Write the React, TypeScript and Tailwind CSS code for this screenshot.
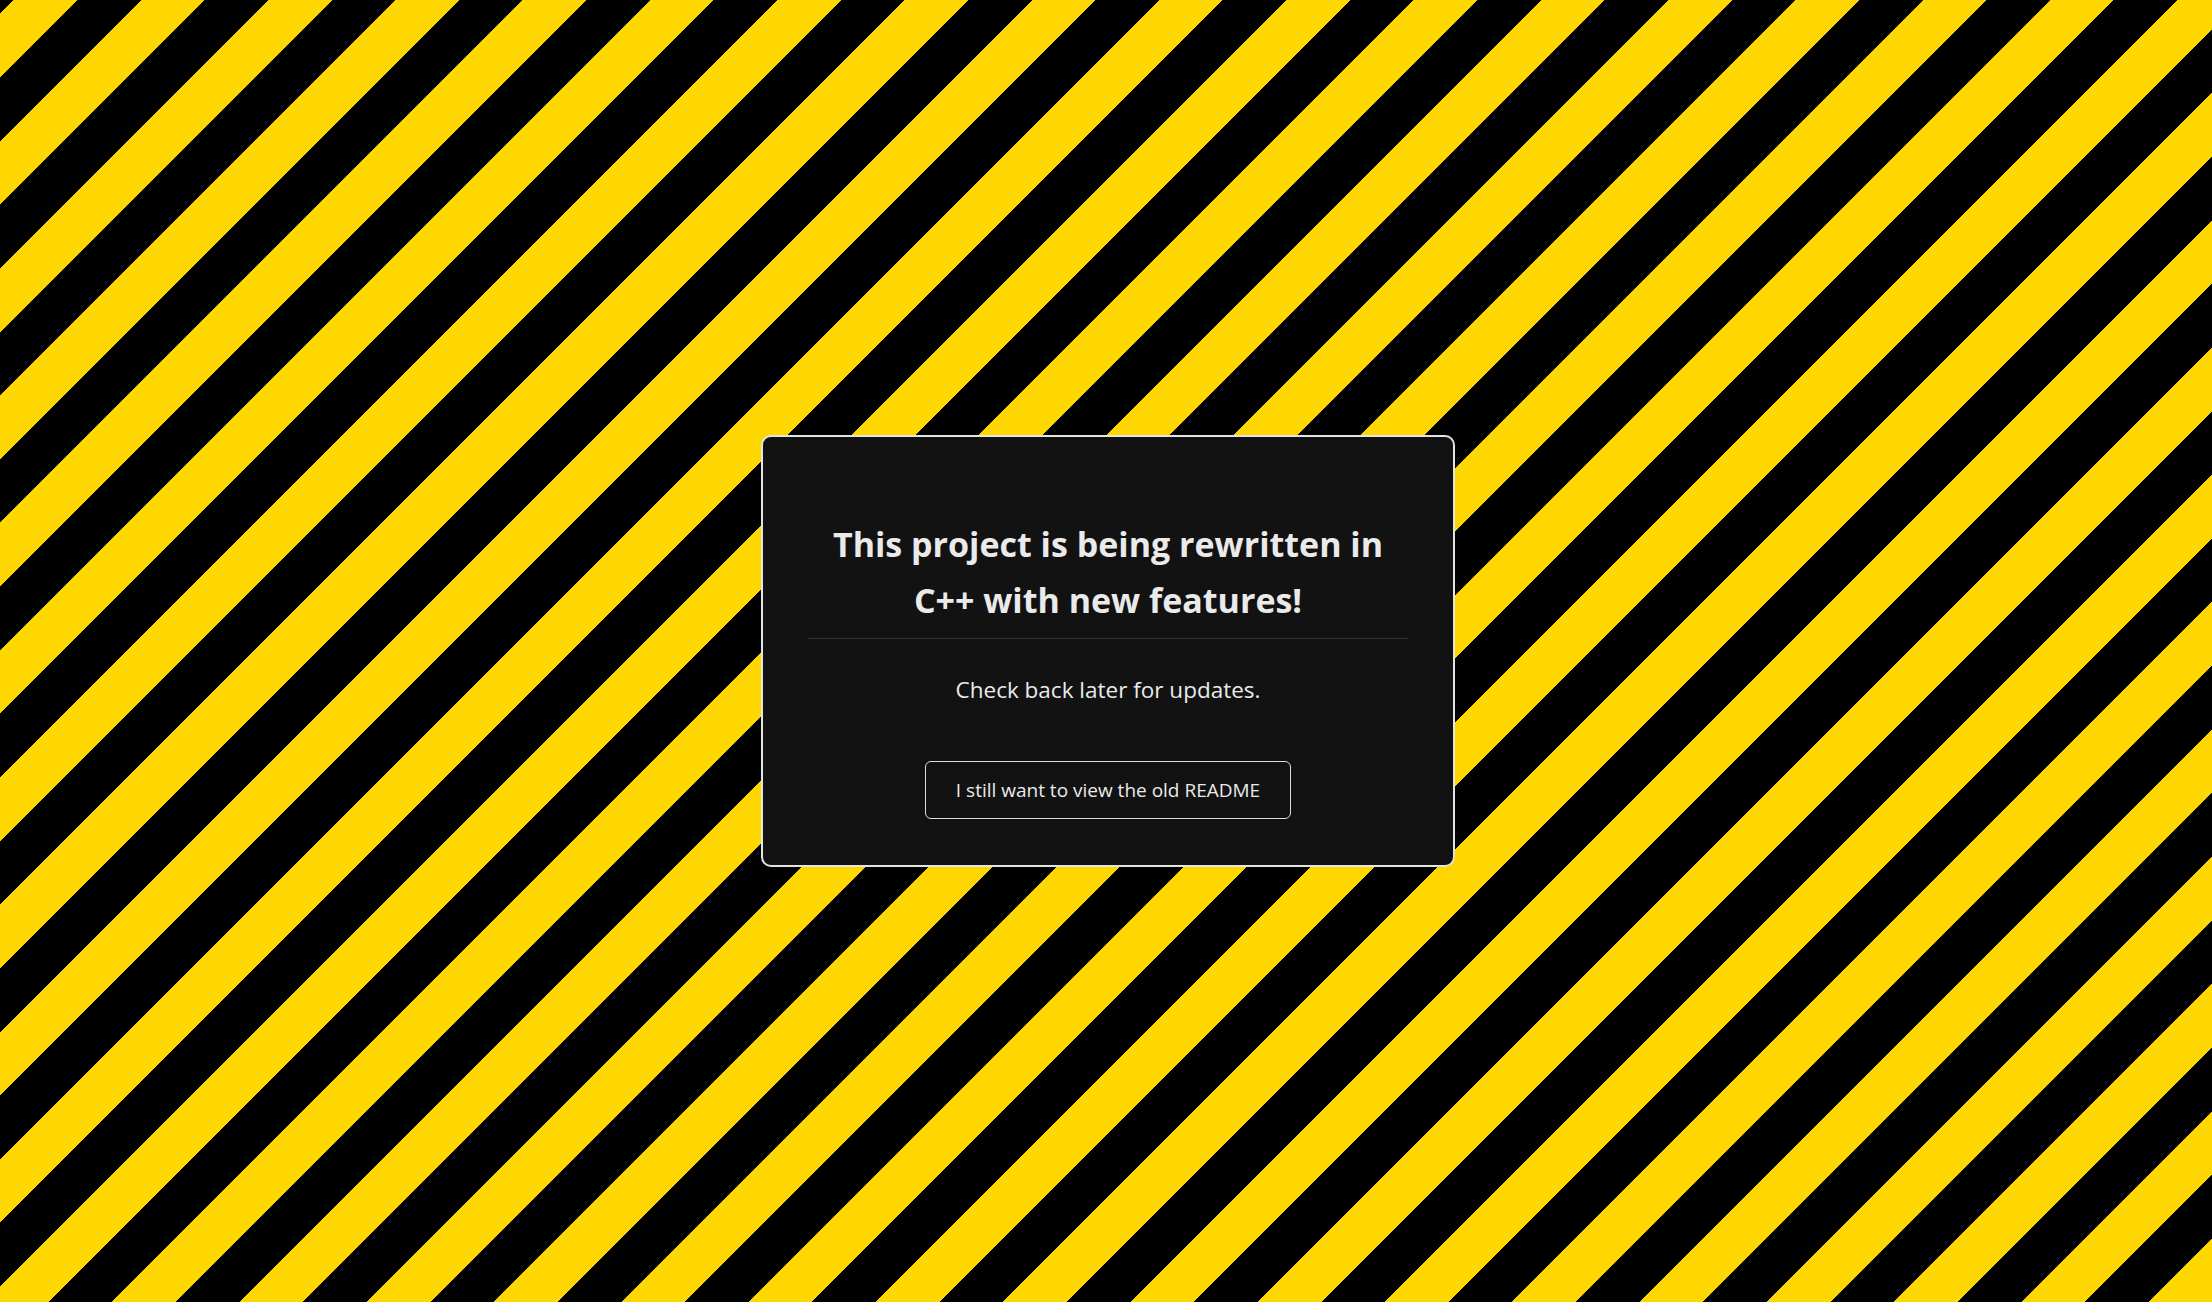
export default function App() {
    return (
        <div className="flex h-screen w-full items-center justify-center bg-[image:repeating-linear-gradient(-45deg,#ffd700_0_45px,#000_45px_90px)] font-['Open_Sans',sans-serif]">
            <div className="ml-[4px] w-[694px] rounded-[10px] border-2 border-[#e4e4e4] bg-[#121212] px-[45px] pt-[79px] pb-[46px] text-center text-[#eaeaea]">
                <h1 className="text-[34px] font-bold leading-[56px]">
                    This project is being rewritten in C++ with new features!
                </h1>
                <div className="mt-[10px] h-px bg-[#333]"></div>
                <p className="mt-[34px] text-[22.5px] leading-[33px]">Check back later for updates.</p>
                <button className="mt-[55px] inline-flex h-[58px] items-center rounded-[6px] border border-[#dcdcdc] bg-transparent px-[30px] text-[19px] text-[#eaeaea]">
                    I still want to view the old README
                </button>
            </div>
        </div>
    )
}
